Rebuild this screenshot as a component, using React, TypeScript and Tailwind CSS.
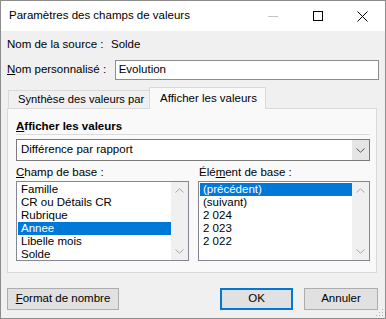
import React from "react";

const ChevronUp = () => (
   <svg width="9" height="5" viewBox="0 0 9 5" className="block">
      <path d="M0.5 4.5 L4.5 0.8 L8.5 4.5" fill="none" stroke="#a6a6a6" strokeWidth="1" />
   </svg>
);

const ChevronDown = ({ color = "#a6a6a6" }: { color?: string }) => (
   <svg width="9" height="5" viewBox="0 0 9 5" className="block">
      <path d="M0.5 0.5 L4.5 4.2 L8.5 0.5" fill="none" stroke={color} strokeWidth="1" />
   </svg>
);

interface ListProps {
   items: string[];
   selected: number;
   width: string;
}

const ListBox = ({ items, selected, width }: ListProps) => (
   <div className={`flex h-[80px] ${width} border border-[#828790] bg-white`}>
      <div className="flex-1 pt-[1px] pl-[1px]">
         {items.map((item, index) => (
            <div
               key={index}
               className={`h-[13px] pl-[3px] leading-[13px] whitespace-nowrap ${
                  index === selected ? "bg-[#0078d7] text-white" : "text-black"
               }`}
            >
               {item}
            </div>
         ))}
      </div>
      <div className="flex w-[17px] flex-col justify-between bg-[#f0f0f0]">
         <div className="flex h-[17px] items-center justify-center">
            <ChevronUp />
         </div>
         <div className="flex h-[17px] items-center justify-center">
            <ChevronDown />
         </div>
      </div>
   </div>
);

const App = () => {
   return (
      <div className="h-[319px] w-[386px] overflow-hidden border border-[#8c8c8c] bg-[#f0f0f0] font-['Liberation_Sans',Arial,sans-serif] text-[11.5px] text-black">
         {/* title bar */}
         <div className="flex h-[30px] items-center bg-white">
            <div className="flex-1 pl-[8px]">Paramètres des champs de valeurs</div>
            <div className="flex h-full w-[45px] items-center justify-center">
               <div className="h-[1px] w-[10px] bg-[#c4c4c4]" />
            </div>
            <div className="flex h-full w-[45px] items-center justify-center">
               <div className="h-[10px] w-[10px] border border-black" />
            </div>
            <div className="flex h-full w-[45px] items-center justify-center">
               <svg width="11" height="11" viewBox="0 0 11 11">
                  <path d="M0.5 0.5 L10.5 10.5 M10.5 0.5 L0.5 10.5" stroke="#000" strokeWidth="1" />
               </svg>
            </div>
         </div>

         <div className="flex flex-col px-[6px]">
            <div className="mt-[5px] flex h-[16px] leading-[16px]">
               <div className="w-[104px]">Nom de la source :</div>
               <div>Solde</div>
            </div>
            <div className="mt-[8px] flex h-[20px] items-center">
               <div className="w-[108px]">
                  <span className="underline">N</span>om personnalisé :
               </div>
               <div className="flex h-[20px] w-[265px] items-center border border-[#8d8d8d] bg-white pl-[3px]">
                  Evolution
               </div>
            </div>

            {/* tabs */}
            <div className="mt-[7px] flex h-[21px] items-end">
               <div className="ml-[1px] flex h-[18px] w-[141px] items-center border-t border-l border-[#d9d9d9] pl-[9px] text-[11.2px] whitespace-nowrap">
                  Synthèse des valeurs par
               </div>
               <div className="relative z-10 mb-[-1px] flex h-[22px] w-[117px] items-center border-t border-r border-l border-[#d9d9d9] bg-[#f9f9f9] pl-[10px]">
                  Afficher les valeurs
               </div>
            </div>
            <div className="h-[165px] w-[370px] border border-[#d9d9d9] bg-[#f9f9f9] pl-[8px]">
               <div className="mt-[9px] h-[17px] w-[354px] border-b border-[#dcdcdc] leading-[16px] font-bold">
                  <span className="underline">A</span>fficher les valeurs
               </div>
               <div className="mt-[4px] flex h-[22px] w-[354px] border border-[#7a7a7a] bg-white">
                  <div className="flex flex-1 items-center pl-[4px]">Différence par rapport</div>
                  <div className="flex w-[17px] items-center justify-center bg-[#e5e5e5]">
                     <ChevronDown color="#555" />
                  </div>
               </div>
               <div className="mt-[3px] flex gap-[9px]">
                  <div className="flex flex-col">
                     <div className="h-[16px] leading-[16px]">
                        <span className="underline">C</span>hamp de base :
                     </div>
                     <div className="mt-[1px]">
                        <ListBox
                           width="w-[173px]"
                           selected={3}
                           items={["Famille", "CR ou Détails CR", "Rubrique", "Annee", "Libelle mois", "Solde"]}
                        />
                     </div>
                  </div>
                  <div className="flex flex-col">
                     <div className="h-[16px] pl-[1px] leading-[16px]">
                        Élé<span className="underline">m</span>ent de base :
                     </div>
                     <div className="mt-[1px]">
                        <ListBox
                           width="w-[172px]"
                           selected={0}
                           items={["(précédent)", "(suivant)", "2 024", "2 023", "2 022"]}
                        />
                     </div>
                  </div>
               </div>
            </div>

            {/* buttons */}
            <div className="mt-[15px] mr-[1px] flex gap-[11px]">
               <button className="h-[22px] w-[112px] border border-[#adadad] bg-[#e1e1e1]">
                  <span className="underline">F</span>ormat de nombre
               </button>
               <button className="ml-auto h-[22px] w-[73px] border-2 border-[#0078d7] bg-[#e1e1e1]">OK</button>
               <button className="h-[22px] w-[74px] border border-[#adadad] bg-[#e1e1e1]">Annuler</button>
            </div>
         </div>

         {/* resize grip */}
         <div className="relative">
            <svg width="10" height="10" viewBox="0 0 10 10" className="absolute right-[1px] top-[-3px]">
               <rect x="8" y="2" width="1" height="1" fill="#b0b0b0" />
               <rect x="5" y="5" width="1" height="1" fill="#b0b0b0" />
               <rect x="8" y="5" width="1" height="1" fill="#b0b0b0" />
               <rect x="2" y="8" width="1" height="1" fill="#b0b0b0" />
               <rect x="5" y="8" width="1" height="1" fill="#b0b0b0" />
               <rect x="8" y="8" width="1" height="1" fill="#b0b0b0" />
            </svg>
         </div>
      </div>
   );
};

export default App;
